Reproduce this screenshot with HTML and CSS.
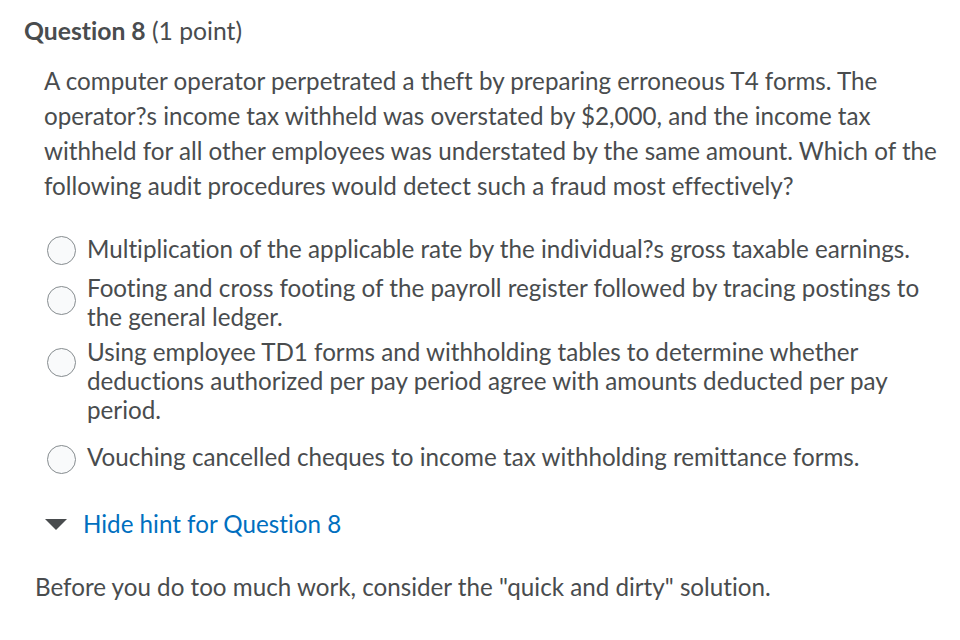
FILE: index.html
```html
<!DOCTYPE html>
<html>
<head>
<meta charset="utf-8">
<link rel="stylesheet" href="styles.css">
</head>
<body>
<div class="question">
  <h2 class="q-title"><strong>Question 8</strong> <span class="pts">(1 point)</span></h2>
  <p class="q-text">A computer operator perpetrated a theft by preparing erroneous T4 forms. The operator?s income tax withheld was overstated by $2,000, and the income tax withheld for all other employees was understated by the same amount. Which of the following audit procedures would detect such a fraud most effectively?</p>
  <div class="options">
    <label class="opt opt-1"><span class="radio"></span><span class="opt-text">Multiplication of the applicable rate by the individual?s gross taxable earnings.</span></label>
    <label class="opt opt-2"><span class="radio"></span><span class="opt-text">Footing and cross footing of the payroll register followed by tracing postings to the general ledger.</span></label>
    <label class="opt opt-3"><span class="radio"></span><span class="opt-text">Using employee TD1 forms and withholding tables to determine whether deductions authorized per pay period agree with amounts deducted per pay period.</span></label>
    <label class="opt opt-4"><span class="radio"></span><span class="opt-text">Vouching cancelled cheques to income tax withholding remittance forms.</span></label>
  </div>
  <div class="hint-toggle"><span class="tri"></span><a class="hint-link">Hide hint for Question 8</a></div>
  <p class="hint">Before you do too much work, consider the "quick and dirty" solution.</p>
</div>
</body>
</html>
```
FILE: styles.css
```css
html, body { margin: 0; padding: 0; background: #fff; }
body { font-family: Lato, "Open Sans", sans-serif; color: #494c4e; font-variant-ligatures: none; }
.question { padding: 15px 0 0 24px; width: 936px; box-sizing: border-box; }
.q-title { margin: 0; font-size: 24.7px; font-weight: normal; line-height: 32px; }
.q-title strong { font-weight: 700; }
.q-text { margin: 15.5px 0 0 20px; font-size: 24.2px; line-height: 35px; width: 910px; }
.options { margin: 31px 0 0 23px; display: flex; flex-direction: column; gap: 8px; }
.opt { display: flex; align-items: flex-start; font-size: 24.2px; line-height: 29px; }
.radio { flex: none; width: 29px; height: 29px; border: 1px solid #868c8f; border-radius: 50%; box-sizing: border-box; margin-right: 11px; background: #f9fafb; }
.opt-text { width: 850px; }
.opt-1 .radio, .opt-4 .radio { margin-top: 2.5px; }
.opt-2 .radio { margin-top: 12.5px; }
.opt-3 .radio { margin-top: 10.5px; }
.opt-3 { margin-top: -2px; }
.opt-4 { margin-top: 10px; }
.hint-toggle { margin: 35px 0 0 21px; display: flex; align-items: center; font-size: 24.2px; line-height: 29px; }
.tri { width: 0; height: 0; border-left: 11px solid transparent; border-right: 11px solid transparent; border-top: 11px solid #494c4e; margin-right: 16px; margin-top: 2px; }
.hint-link { color: #006fbf; }
.hint { margin: 34px 0 0 11px; font-size: 24.2px; line-height: 29px; }
```
